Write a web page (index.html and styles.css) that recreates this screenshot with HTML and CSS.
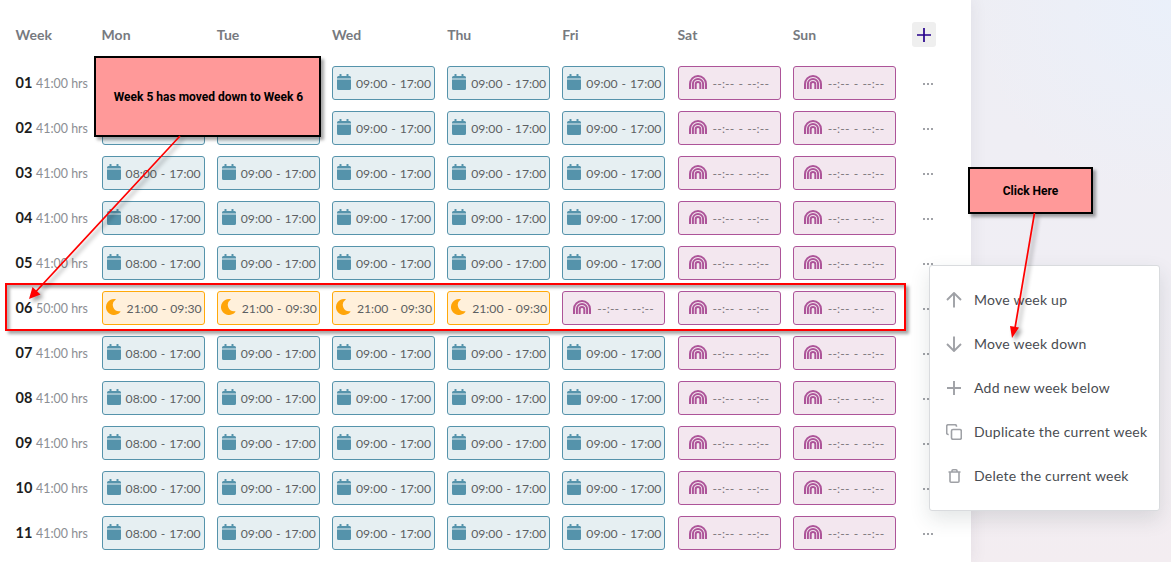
FILE: index.html
```html
<!DOCTYPE html>
<html lang="en">
  <head>
    <meta charset="UTF-8" />
    <meta name="viewport" content="width=device-width, initial-scale=1.0" />
    <title>Shift pattern</title>
    <link rel="stylesheet" href="styles.css">
  </head>
  <body>
    <svg class="sprite">
      <symbol id="calendar" viewBox="0 0 14 16">
        <path d="M0 5.500h14v9a1.500 1.500 0 0 1-1.500 1.500h-11A1.500 1.500 0 0 1 0 14.500zM1.500 2H2.500V.4C2.500.2 2.700 0 2.900 0h1.200c.2 0 .4.200.4.400V2h5V.4c0-.2.200-.4.400-.4h1.200c.2 0 .4.200.4.400V2h1A1.500 1.500 0 0 1 14 3.500v1H0v-1A1.500 1.500 0 0 1 1.500 2z" />
      </symbol>
      <symbol id="moon" viewBox="0 0 16 16">
        <path d="M8 0a8 8 0 1 0 6.300 12.900c.3-.4 0-.8-.5-.7A6.300 6.300 0 0 1 9.500.800C9.900.600 9.800.100 9.400.100A8 8 0 0 0 8 0z" />
      </symbol>
      <symbol id="rainbow" viewBox="0 0 18 14">
        <path d="M1 14V9a8 8 0 0 1 16 0v5M3.900 14V9a5.100 5.100 0 0 1 10.200 0v5M6.700 14V9.200a2.300 2.300 0 0 1 4.600 0V14" />
      </symbol>
    </svg>

    <div class="panel">
      <div class="row head">
        <p>Week</p>
        <p>Mon</p>
        <p>Tue</p>
        <p>Wed</p>
        <p>Thu</p>
        <p>Fri</p>
        <p>Sat</p>
        <p>Sun</p>
        <button class="add">
          <svg width="14" height="14" viewBox="0 0 14 14"><path d="M7 0v14M0 7h14" /></svg>
        </button>
      </div>
      <div class="weeks"></div>
    </div>

    <div class="menu">
      <div class="item">
        <svg width="16" height="16" viewBox="0 0 16 16"><path d="M8 15.500V1.500M1 8l7-7 7 7" /></svg>
        <span>Move week up</span>
      </div>
      <div class="item">
        <svg width="16" height="16" viewBox="0 0 16 16"><path d="M8 .5v14M1 8l7 7 7-7" /></svg>
        <span>Move week down</span>
      </div>
      <div class="item">
        <svg width="16" height="16" viewBox="0 0 16 16"><path d="M8 1v14M1 8h14" /></svg>
        <span>Add new week below</span>
      </div>
      <div class="item">
        <svg class="thin" width="16" height="16" viewBox="0 0 16 16"><rect x="5.500" y="5.500" width="9.800" height="9.800" rx="1.500" /><path d="M2.700 10.500h-.5A1.500 1.500 0 0 1 .7 9V2.200A1.500 1.500 0 0 1 2.200.700H9a1.500 1.500 0 0 1 1.500 1.500v.5" /></svg>
        <span>Duplicate the current week</span>
      </div>
      <div class="item">
        <svg class="thin" width="16" height="16" viewBox="0 0 16 16"><path d="M2.500 4h12M4 4v9.300a1 1 0 0 0 1 1h7a1 1 0 0 0 1-1V4M6 4V2.800a1 1 0 0 1 1-1h3a1 1 0 0 1 1 1V4" /></svg>
        <span>Delete the current week</span>
      </div>
    </div>

    <div class="highlight"></div>
    <div class="note note-moved">Week 5 has moved down to Week 6</div>
    <div class="note note-click">Click Here</div>
    <svg class="arrows" width="1171" height="562">
      <path class="line" d="M180 136L36 291.500M1034.500 213L1015 328" />
      <path class="tip" d="M29 299l3.500-12 8 7.500zM1012 338l-2-12 9 1.500z" />
    </svg>

    <script>
      const weeks = document.querySelector(".weeks");

      const icons = {
        day: '<svg width="14" height="16"><use href="#calendar" /></svg>',
        night: '<svg width="16" height="16"><use href="#moon" /></svg>',
        off: '<svg width="18" height="14"><use href="#rainbow" /></svg>',
      };

      function shift(type, time) {
        return `<div class="shift ${type}">${icons[type]}<span>${time}</span></div>`;
      }

      const off = shift("off", "--:-- - --:--");
      const late = shift("day", "09:00 - 17:00");
      const night = shift("night", "21:00 - 09:30");
      const normal = shift("day", "08:00 - 17:00") + late.repeat(4) + off.repeat(2);
      const nights = night.repeat(4) + off.repeat(3);

      for (let i = 1; i <= 11; i++) {
        const isNight = i === 6;
        weeks.innerHTML += `
          <div class="row">
            <p class="week"><b>${String(i).padStart(2, "0")}</b> <span>${isNight ? "50:00" : "41:00"} hrs</span></p>
            ${isNight ? nights : normal}
            <div class="dots"><i></i><i></i><i></i></div>
          </div>`;
      }
    </script>
  </body>
</html>
```
FILE: styles.css
```css
* {
  box-sizing: border-box;
}
body {
  margin: 0;
  height: 562px;
  overflow: hidden;
  position: relative;
  font-family: "Lato", "Open Sans", sans-serif;
  background: radial-gradient(circle at 100% 0, #eaf0fa, rgba(234, 240, 250, 0) 200px),
    linear-gradient(#eeeef4, #f0eef4 50%, #f3edf1);
}
p {
  margin: 0;
}
.sprite {
  display: none;
}
.panel {
  width: 971px;
  height: 562px;
  padding: 22px 0 0 15.6px;
  background-color: white;
  box-shadow: 0 0 16px rgba(60, 60, 80, 0.09);
}
.row {
  display: grid;
  grid-template-columns: 86px repeat(7, 115.2px) 50px;
  align-items: center;
  height: 34px;
}
.head {
  height: 25px;
  margin-bottom: 19px;
  font-size: 14px;
  font-weight: bold;
  color: #777a7f;
}
.add {
  width: 24px;
  height: 25px;
  margin-left: 4px;
  padding: 0;
  border: none;
  border-radius: 3px;
  background-color: #efefef;
  display: flex;
  justify-content: center;
  align-items: center;
}
.add path {
  stroke: #26008c;
  stroke-width: 1.7;
}
.weeks {
  display: flex;
  flex-direction: column;
  gap: 11px;
}
.week {
  font-size: 12.4px;
  color: #8b8e93;
  white-space: nowrap;
  margin-bottom: 1px;
}
.week b {
  font-size: 14.5px;
  color: #1c1d20;
  margin-right: 0.5px;
}
.shift {
  width: 103px;
  height: 34px;
  border: 1px solid;
  border-radius: 3px;
  display: flex;
  align-items: center;
  font-size: 12.2px;
  word-spacing: 0.8px;
  white-space: nowrap;
}
.shift span {
  color: #5c5f62;
  position: relative;
  top: 0.5px;
}
.day {
  padding-left: 4px;
  gap: 5px;
  border-color: #5593ab;
  background-color: #e6eff2;
}
.day svg {
  fill: #5593ab;
  margin-bottom: 2px;
}
.night {
  padding-left: 3px;
  gap: 5px;
  border-color: #ffa90a;
  background-color: #fff0db;
}
.night svg {
  fill: #ffa50a;
  margin-bottom: 2px;
}
.off {
  padding-left: 10px;
  gap: 6px;
  border-color: #ad5499;
  background-color: #f3e7ef;
  letter-spacing: 0.15px;
  word-spacing: 0.8px;
}
.off svg {
  fill: none;
  stroke: #ad5499;
  stroke-width: 2;
  margin-bottom: 2px;
}
.off span {
  color: #7b757a;
}
.dots {
  display: flex;
  gap: 2px;
  margin-left: 15.4px;
  margin-top: 1px;
}
.dots i {
  width: 2px;
  height: 2px;
  background-color: #a0a2a7;
}

.menu {
  position: absolute;
  left: 929px;
  top: 265px;
  width: 231px;
  height: 246px;
  padding: 12px 0 0 16px;
  border: 1px solid #d9dbde;
  border-radius: 3px;
  background-color: white;
  box-shadow: 0 8px 20px rgba(40, 60, 60, 0.13);
}
.item {
  height: 44px;
  display: flex;
  align-items: center;
  gap: 12px;
  font-size: 14px;
  letter-spacing: 0.25px;
  color: #494c51;
  white-space: nowrap;
}
.item span {
  margin-bottom: 2px;
}
.item svg {
  fill: none;
  stroke: #9fa1a6;
  stroke-width: 1.9;
}
.item .thin {
  stroke-width: 1.6;
}

.highlight {
  position: absolute;
  left: 5px;
  top: 283px;
  width: 901px;
  height: 48px;
  border: 2px solid #ff0000;
  box-shadow: 3px 3px 3px rgba(0, 0, 0, 0.35), inset 3px 3px 3px rgba(0, 0, 0, 0.3);
}
.note {
  position: absolute;
  display: flex;
  justify-content: center;
  align-items: center;
  border: 2px solid black;
  background-color: #ff9999;
  box-shadow: 3px 3px 3px rgba(0, 0, 0, 0.35);
  font-family: "Roboto", "Liberation Sans", sans-serif;
  font-size: 12px;
  font-weight: bold;
  color: black;
}
.note-moved {
  left: 94px;
  top: 56px;
  width: 227px;
  height: 81px;
  padding-left: 2px;
}
.note-click {
  left: 968px;
  top: 167px;
  width: 125px;
  height: 47px;
}
.arrows {
  position: absolute;
  left: 0;
  top: 0;
  filter: drop-shadow(3px 3px 2px rgba(0, 0, 0, 0.4));
}
.line {
  stroke: #ff0000;
  stroke-width: 1.7;
}
.tip {
  fill: #ff0000;
}
```
